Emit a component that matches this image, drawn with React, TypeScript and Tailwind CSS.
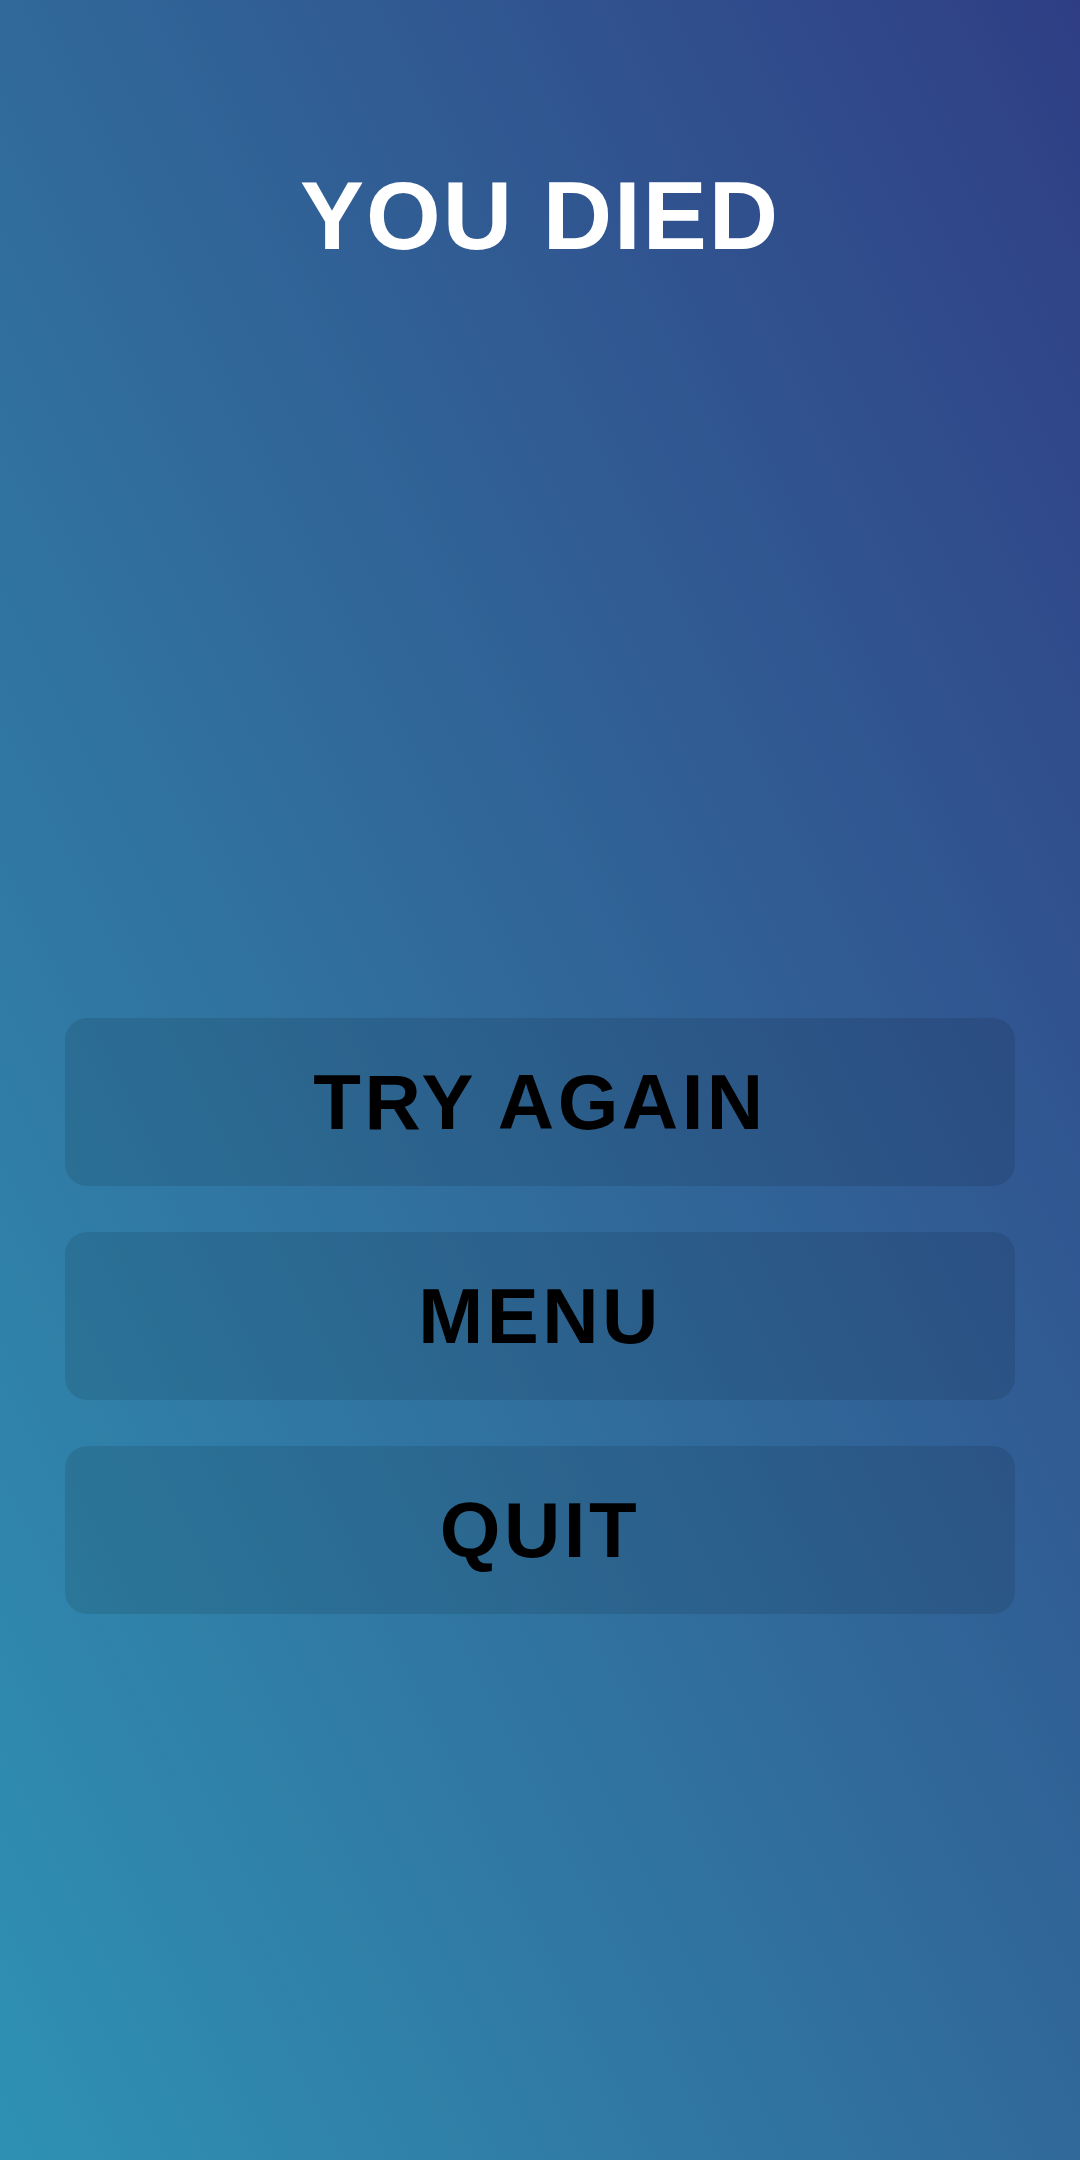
import React from "react";

const buttons = ["TRY AGAIN", "MENU", "QUIT"];

const App = () => {
  return (
    <div className="w-[1080px] h-[2160px] bg-linear-to-tr from-[#2e91b3] via-[#30699a] to-[#2f3e84] flex flex-col items-center font-['Liberation_Sans',Arial,sans-serif]">
      <div className="mt-[168px] h-[100px] leading-none text-[96px] font-bold tracking-[2px] text-white">
        YOU DIED
      </div>
      <div className="mt-[750px] w-[950px] flex flex-col gap-[46px]">
        {buttons.map((label) => (
          <button
            key={label}
            className="h-[168px] w-full rounded-[22px] bg-black/10 flex items-center justify-center text-[78px] leading-none font-bold tracking-[3.5px] text-black"
          >
            {label}
          </button>
        ))}
      </div>
    </div>
  );
};

export default App;
